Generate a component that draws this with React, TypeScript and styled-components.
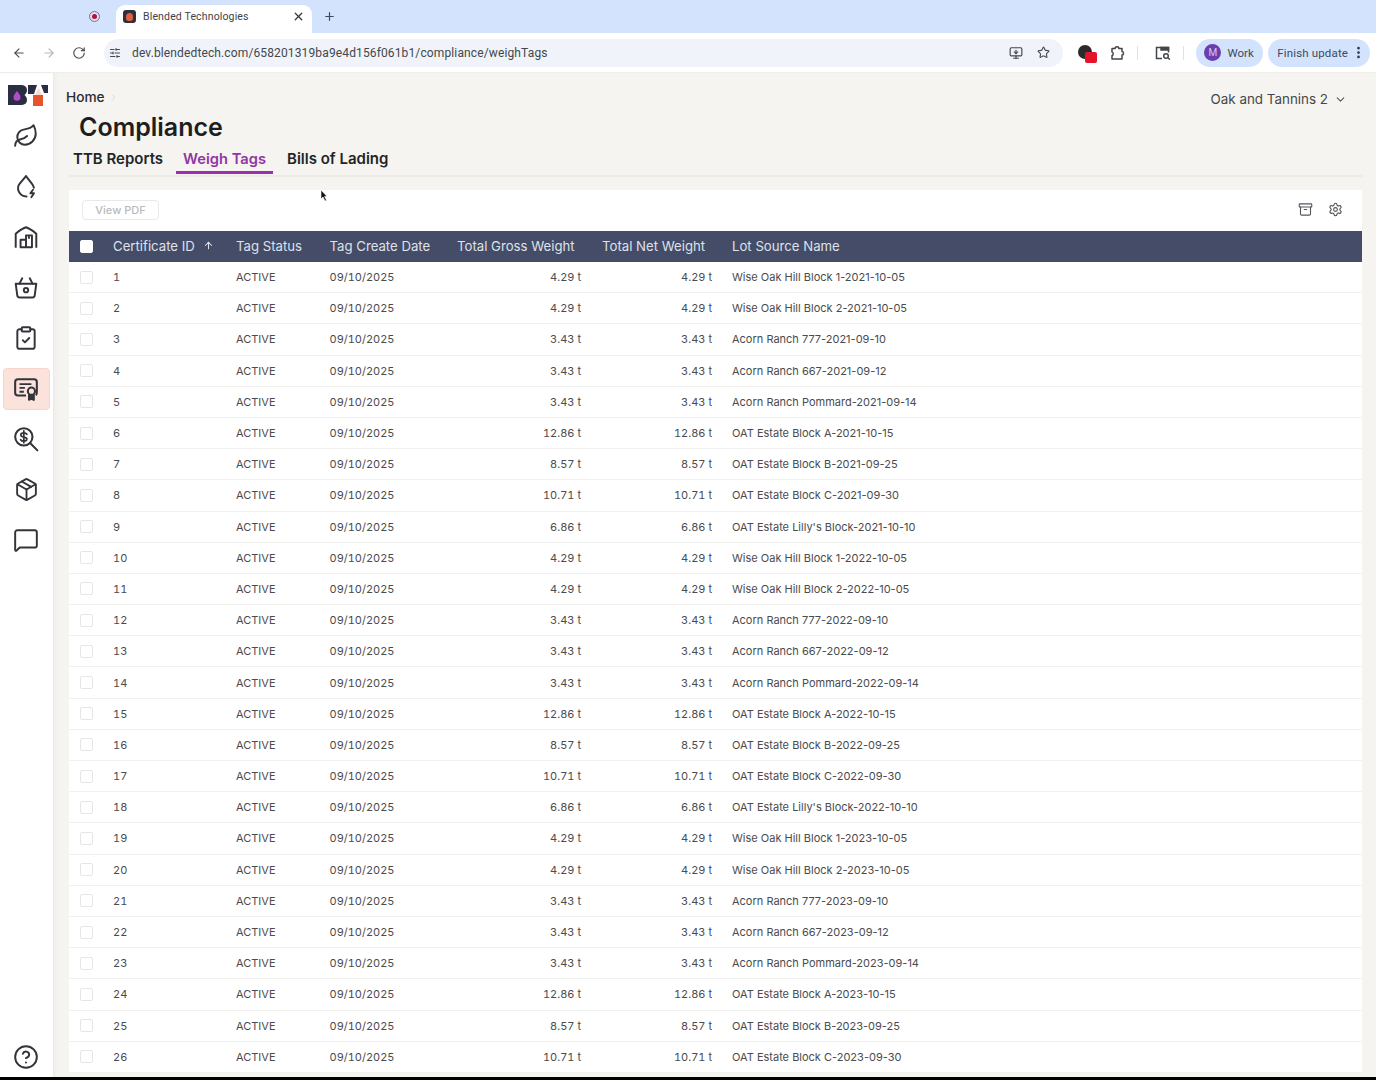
import styled, { createGlobalStyle } from 'styled-components'
import {
  ArrowLeft, ArrowRight, ArrowUp, Archive, ChevronDown, ChevronRight, CircleHelp,
  ClipboardCheck, EllipsisVertical, Leaf, MessageSquare, MonitorDown, Package, Plus, RotateCw,
  Settings, SlidersHorizontal, Star, X,
} from 'lucide-react'

const GlobalStyle = createGlobalStyle`
  html, body { margin: 0; padding: 0; background: #000; }
  body { font-family: Inter, "Liberation Sans", sans-serif; }
  * { box-sizing: border-box; }
`

const Page = styled.div`
  width: 1376px;
  height: 1077px;
  overflow: hidden;
  display: flex;
  flex-direction: column;
  background: #f5f4f0;
`

const TabStrip = styled.div`
  height: 33px;
  background: #d3e3fd;
  display: flex;
  align-items: flex-end;
  padding-left: 89px;
  flex: none;
`

const RecordDot = styled.span`
  width: 11px;
  height: 11px;
  margin-bottom: 11px;
  border-radius: 50%;
  border: 1.5px solid #c8506a;
  display: flex;
  align-items: center;
  justify-content: center;
  margin-right: 16px;
  &::after {
    content: '';
    width: 5px;
    height: 5px;
    border-radius: 50%;
    background: #b3123a;
  }
`

const Tab = styled.div`
  width: 196px;
  height: 28px;
  background: #fff;
  border-radius: 9px 9px 0 0;
  display: flex;
  align-items: center;
  padding: 0 7px 5px 7px;
  font-size: 10.5px;
  color: #3f4347;
  font-family: Roboto, sans-serif;
  letter-spacing: 0.15px;
  svg { margin-left: auto; color: #33373b; }
`

const Favicon = styled.span`
  width: 13px;
  height: 13px;
  border-radius: 3px;
  background: #2e3040;
  margin-right: 7px;
  display: flex;
  align-items: flex-end;
  justify-content: center;
  &::after {
    content: '';
    width: 7px;
    height: 8px;
    margin-bottom: 2px;
    background: #e2603c;
    border-radius: 50% 50% 40% 40%;
  }
`

const NewTab = styled.span`
  display: flex;
  margin: 0 0 10px 11px;
  color: #3f4a5c;
`

const Toolbar = styled.div`
  height: 39px;
  background: #fff;
  display: flex;
  align-items: center;
  padding: 0 6px 0 12px;
  flex: none;
  box-shadow: 0 1px 1px #efeee9;
  position: relative;
  z-index: 1;
`

const NavButton = styled.span<{ $muted?: boolean }>`
  width: 14px;
  display: flex;
  margin-right: 16px;
  color: ${p => (p.$muted ? '#b4b7bb' : '#4a4e52')};
`

const Omnibox = styled.div`
  width: 962px;
  height: 28px;
  margin-left: 2px;
  border-radius: 14px;
  background: #f0f4fa;
  display: flex;
  align-items: center;
  padding: 0 13px 0 5px;
  font-family: Roboto, sans-serif;
  font-size: 12px;
  letter-spacing: 0.13px;
  color: #43474c;
  svg { color: #44484d; }
`

const Url = styled.span`
  margin-left: 11px;
  flex: 1;
`

const OmniIcon = styled.span`
  display: flex;
  margin-left: 14px;
`

const ExtensionDot = styled.span`
  position: relative;
  width: 14px;
  height: 14px;
  margin: -1px 0 0 15px;
  border-radius: 50%;
  background: #2a2a2c;
  &::after {
    content: '';
    position: absolute;
    left: 7px;
    top: 7px;
    width: 12px;
    height: 11px;
    border-radius: 2px;
    background: #e3132c;
  }
`

const ToolIcon = styled.span`
  display: flex;
  margin-left: 17px;
  color: #43474c;
`

const Divider = styled.span`
  width: 1px;
  height: 14px;
  background: #dfe3e8;
  margin-left: 12px;
`

const ProfilePill = styled.div`
  height: 28px;
  width: 67px;
  margin-left: 12px;
  border-radius: 14px;
  background: #d3e3fd;
  display: flex;
  align-items: center;
  padding-left: 8px;
  gap: 6px;
  font-family: Roboto, sans-serif;
  font-size: 11.5px;
  color: #3e4a5c;
`

const Avatar = styled.span`
  width: 17px;
  height: 17px;
  border-radius: 50%;
  background: #6a3db0;
  color: #d9c8f2;
  font-size: 10px;
  display: flex;
  align-items: center;
  justify-content: center;
`

const UpdatePill = styled.div`
  height: 28px;
  width: 102px;
  margin-left: 5px;
  border-radius: 14px;
  background: #d3e3fd;
  display: flex;
  align-items: center;
  padding-left: 9px;
  font-family: Roboto, sans-serif;
  font-size: 11.5px;
  letter-spacing: 0.15px;
  color: #3e4a5c;
  white-space: nowrap;
  svg { margin-left: 3px; flex: none; color: #2f3a4a; }
`

const Body = styled.div`
  flex: 1;
  min-height: 0;
  display: flex;
`

const Sidebar = styled.nav`
  width: 54px;
  flex: none;
  background: #fff;
  border-right: 1px solid #ecebe7;
  box-shadow: 2px 0 3px #f0efea;
  display: flex;
  flex-direction: column;
  align-items: center;
  padding-top: 12px;
`

const Logo = styled.svg`
  width: 40px;
  height: 22px;
  margin: 0 0 9px 3px;
  flex: none;
`

const NavItem = styled.span<{ $active?: boolean }>`
  width: 47px;
  height: 42px;
  margin-bottom: 8.5px;
  margin-left: -1px;
  flex: none;
  display: flex;
  align-items: center;
  justify-content: center;
  border-radius: 4px;
  color: #33343a;
  background: ${p => (p.$active ? '#fbe3dc' : 'transparent')};
  border: 1px solid ${p => (p.$active ? '#f5d5cc' : 'transparent')};
`

const HelpItem = styled(NavItem)`
  margin-top: auto;
  margin-bottom: 0;
  height: 40px;
`

const Main = styled.main`
  flex: 1;
  min-width: 0;
  padding: 0 14px 0 15px;
`

const TopRow = styled.div`
  display: flex;
  justify-content: space-between;
  align-items: center;
  height: 38px;
`

const Breadcrumb = styled.div`
  display: flex;
  align-items: center;
  gap: 3px;
  margin-left: -3px;
  margin-top: 12px;
  font-size: 13.7px;
  font-weight: 500;
  color: #2a2b2e;
  svg { color: #dcdbd6; }
`

const Winery = styled.div`
  display: flex;
  align-items: center;
  gap: 6px;
  margin: 16px 15px 0 0;
  font-size: 13.4px;
  color: #45474a;
  svg { color: #55575a; }
`

const Title = styled.h1`
  margin: 1px 0 0 10px;
  font-size: 25px;
  line-height: 32px;
  font-weight: 600;
  color: #1d1e20;
`

const Tabs = styled.div`
  display: flex;
  height: 34px;
  padding-top: 1px;
  border-bottom: 2px solid #eceae5;
`

const TabItem = styled.a<{ $active?: boolean }>`
  height: 30px;
  padding: 5px 7px 0;
  margin-right: ${p => (p.$active ? '7px' : '6px')};
  margin-left: ${p => (p.$active ? '0' : '-3px')};
  font-size: ${p => (p.$active ? '14.7px' : '15px')};
  font-weight: 600;
  line-height: 20px;
  color: ${p => (p.$active ? '#9236a4' : '#232427')};
  border-bottom: 3px solid ${p => (p.$active ? '#9b2fae' : 'transparent')};
  white-space: nowrap;
  &:last-child { margin-left: 0; }
`

const Card = styled.section`
  margin-top: 13px;
  background: #fff;
`

const CardBar = styled.div`
  height: 41px;
  display: flex;
  align-items: center;
  justify-content: space-between;
  padding: 0 19px 2px 13px;
`

const GhostButton = styled.button`
  height: 20px;
  width: 77px;
  border: 1px solid #e9e9e9;
  border-radius: 4px;
  background: #fff;
  font: 500 11px Inter, sans-serif;
  color: #b9babd;
  padding: 0;
`

const BarIcons = styled.div`
  display: flex;
  gap: 15px;
  color: #55575c;
`

const gridColumns = '44px 123px 93.5px 127.5px 145px 130px 1fr'

const HeaderRow = styled.div`
  display: grid;
  grid-template-columns: ${gridColumns};
  align-items: center;
  height: 31px;
  padding-bottom: 2px;
  background: #444c68;
  color: #dfe2ea;
  font-size: 13.2px;
  white-space: nowrap;
`

const Row = styled.div`
  display: grid;
  grid-template-columns: ${gridColumns};
  align-items: center;
  height: 31.2px;
  border-bottom: 1px solid #f1f1ef;
  font-size: 11px;
  color: #4a4b4e;
  white-space: nowrap;
`

const CheckCell = styled.span`
  display: flex;
  padding-left: 11px;
`

const HeaderCheck = styled(CheckCell)`
  padding-top: 2px;
`

const Check = styled.span<{ $header?: boolean }>`
  width: 13px;
  height: 13px;
  border-radius: 2px;
  background: #fff;
  border: 1px solid ${p => (p.$header ? '#fff' : '#e6e6e6')};
`

const SortCell = styled.span`
  display: flex;
  align-items: center;
  gap: 8px;
`

const Numeric = styled.span`
  font-variant-numeric: tabular-nums;
`

const Weight = styled(Numeric)<{ $pad: number }>`
  text-align: right;
  padding-right: ${p => p.$pad}px;
`

const Cursor = styled.svg`
  position: absolute;
  left: 320px;
  top: 189px;
`

const sources = [
  ['Wise Oak Hill Block 1', '10-05', '4.29 t'],
  ['Wise Oak Hill Block 2', '10-05', '4.29 t'],
  ['Acorn Ranch 777', '09-10', '3.43 t'],
  ['Acorn Ranch 667', '09-12', '3.43 t'],
  ['Acorn Ranch Pommard', '09-14', '3.43 t'],
  ['OAT Estate Block A', '10-15', '12.86 t'],
  ['OAT Estate Block B', '09-25', '8.57 t'],
  ['OAT Estate Block C', '09-30', '10.71 t'],
  ["OAT Estate Lilly's Block", '10-10', '6.86 t'],
]

const rows = Array.from({ length: 26 }, (_, i) => {
  const [name, day, weight] = sources[i % 9]
  return { id: i + 1, weight, lot: `${name}-${2021 + Math.floor(i / 9)}-${day}` }
})

const ic = { size: 14, strokeWidth: 2 }
const side = { size: 26, strokeWidth: 1.8 }

const DropBolt = () => (
  <svg width="26" height="26" viewBox="0 0 24 24" fill="none" stroke="currentColor" strokeWidth="1.8" strokeLinecap="round" strokeLinejoin="round">
    <path d="M12 2 6.200 8.800C2.800 13 5.400 20.600 12.500 20.800" />
    <path d="M12 2l5.400 6.800c1 1.300 1.700 2.600 1.900 3.900" />
    <path d="M18.500 14.500l-2.500 3.300h3.400l-2.500 3.700" strokeWidth="1.700" />
  </svg>
)

const Storehouse = () => (
  <svg width="26" height="26" viewBox="0 0 24 24" fill="none" stroke="currentColor" strokeWidth="1.8" strokeLinejoin="round">
    <path d="M2.500 22V9C6 6 9 4 12 3c3 1 6 3 9.500 6v13" />
    <path d="M7 21.500v-7h5v-4h5.500v11zM12 14.500v7M14.700 10.500v3" />
  </svg>
)

const Basket = () => (
  <svg width="26" height="26" viewBox="0 0 24 24" fill="none" stroke="currentColor" strokeWidth="1.8" strokeLinecap="round" strokeLinejoin="round">
    <path d="M2.500 8h19l-1.400 10.500c-.2 1.400-1 2.200-2.200 2.200H6.100c-1.200 0-2-.8-2.200-2.200z" />
    <path d="M8.500 3 6 8M15.500 3 18 8" />
    <circle cx="12" cy="14" r="2" />
  </svg>
)

const Certificate = () => (
  <svg width="26" height="26" viewBox="0 0 24 24" fill="none" stroke="currentColor" strokeWidth="1.900" strokeLinejoin="round">
    <path d="M12 18H4.500C3 18 2 17 2 15.500v-10C2 4 3 3 4.500 3h15C21 3 22 4 22 5.500v10c0 .9-.4 1.700-1 2.200" />
    <path d="M6 7.500h11M6 11h5M6 14.500h4" strokeWidth="1.700" />
    <circle cx="17" cy="14" r="3.300" />
    <path d="M14.800 17v5l2.200-1.200 2.200 1.200v-5" fill="currentColor" />
  </svg>
)

const DollarSearch = () => (
  <svg width="26" height="26" viewBox="0 0 24 24" fill="none" stroke="currentColor" strokeWidth="1.900" strokeLinecap="round">
    <circle cx="10" cy="10" r="8" />
    <path d="M16 16l6.500 6.500" />
    <path d="M12.800 7.600C12.200 6.700 11.200 6.300 10 6.300c-1.600 0-2.800.8-2.800 2 0 2.800 5.600 1 5.600 3.700 0 1.200-1.200 2-2.800 2-1.300 0-2.400-.5-3-1.400M10 4.600v10.800" strokeWidth="1.600" />
  </svg>
)

const ExtensionPiece = () => (
  <svg width="16" height="16" viewBox="0 0 16 16" fill="none" stroke="currentColor" strokeWidth="1.500" strokeLinejoin="round">
    <path d="M3 14v-3.500c1.600 0 1.600-3.500 0-3.500V3.500h3.200C6.200 1.300 9.800 1.300 9.800 3.500H13v3c2 0 2 3.500 0 3.500v4z" />
  </svg>
)

const SearchPanel = () => (
  <svg width="16" height="14" viewBox="0 0 16 14" fill="none" stroke="currentColor" strokeWidth="1.500">
    <path d="M7 12.500H1.500v-11h12v5" />
    <path d="M6 1.500h7.500v2.500H6z" fill="currentColor" />
    <circle cx="11" cy="10" r="2.300" />
    <path d="M13 12l2 1.500" />
  </svg>
)

export default function App() {
  return (
    <>
      <GlobalStyle />
      <Page>
        <TabStrip>
          <RecordDot />
          <Tab>
            <Favicon />
            Blended Technologies
            <X size={13} strokeWidth={2.4} />
          </Tab>
          <NewTab><Plus size={13} strokeWidth={2.2} /></NewTab>
        </TabStrip>
        <Toolbar>
          <NavButton><ArrowLeft {...ic} /></NavButton>
          <NavButton $muted><ArrowRight {...ic} /></NavButton>
          <NavButton><RotateCw {...ic} /></NavButton>
          <Omnibox>
            <SlidersHorizontal size={12} strokeWidth={2} />
            <Url>dev.blendedtech.com/658201319ba9e4d156f061b1/compliance/weighTags</Url>
            <MonitorDown {...ic} />
            <OmniIcon><Star size={13} strokeWidth={2} /></OmniIcon>
          </Omnibox>
          <ExtensionDot />
          <ToolIcon><ExtensionPiece /></ToolIcon>
          <Divider />
          <ToolIcon><SearchPanel /></ToolIcon>
          <Divider />
          <ProfilePill><Avatar>M</Avatar>Work</ProfilePill>
          <UpdatePill>Finish update<EllipsisVertical size={15} strokeWidth={2.4} /></UpdatePill>
        </Toolbar>
        <Body>
          <Sidebar>
            <Logo viewBox="0 0 40 22">
              <path d="M0 1h12c5 0 7 2 7 5 0 2-1 4-2.500 5 1.500 1 2.500 3 2.500 5 0 3-2 5-7 5H0z" fill="#2c2d42" />
              <path d="M9 7c2 2.300 3.500 4.300 3.500 6.300a3.500 3.500 0 0 1-7 0C5.500 11.300 7 9.300 9 7z" fill="#b04bd0" />
              <path d="M20 1h9l-3 9h-6zM33 1h7v8h-4z" fill="#2c2d42" />
              <path d="M30.500 4l4 8h-8z" fill="#f6d9cf" />
              <path d="M25 11h10v11H25z" fill="#e7532d" />
            </Logo>
            <NavItem><Leaf {...side} /></NavItem>
            <NavItem><DropBolt /></NavItem>
            <NavItem><Storehouse /></NavItem>
            <NavItem><Basket /></NavItem>
            <NavItem><ClipboardCheck {...side} /></NavItem>
            <NavItem $active><Certificate /></NavItem>
            <NavItem><DollarSearch /></NavItem>
            <NavItem><Package size={25} strokeWidth={1.8} /></NavItem>
            <NavItem><MessageSquare {...side} /></NavItem>
            <HelpItem><CircleHelp {...side} /></HelpItem>
          </Sidebar>
          <Main>
            <TopRow>
              <Breadcrumb>Home<ChevronRight size={11} /></Breadcrumb>
              <Winery>Oak and Tannins 2<ChevronDown size={13} /></Winery>
            </TopRow>
            <Title>Compliance</Title>
            <Tabs>
              <TabItem>TTB Reports</TabItem>
              <TabItem $active>Weigh Tags</TabItem>
              <TabItem>Bills of Lading</TabItem>
            </Tabs>
            <Card>
              <CardBar>
                <GhostButton disabled>View PDF</GhostButton>
                <BarIcons>
                  <Archive size={15} strokeWidth={1.8} />
                  <Settings size={15} strokeWidth={1.8} />
                </BarIcons>
              </CardBar>
              <HeaderRow>
                <HeaderCheck><Check $header /></HeaderCheck>
                <SortCell>Certificate ID<ArrowUp size={11} strokeWidth={2.2} /></SortCell>
                <span>Tag Status</span>
                <span>Tag Create Date</span>
                <span>Total Gross Weight</span>
                <span>Total Net Weight</span>
                <span>Lot Source Name</span>
              </HeaderRow>
              {rows.map(r => (
                <Row key={r.id}>
                  <CheckCell><Check /></CheckCell>
                  <Numeric>{r.id}</Numeric>
                  <span>ACTIVE</span>
                  <Numeric>09/10/2025</Numeric>
                  <Weight $pad={21}>{r.weight}</Weight>
                  <Weight $pad={20}>{r.weight}</Weight>
                  <span>{r.lot}</span>
                </Row>
              ))}
            </Card>
          </Main>
        </Body>
        <Cursor width="8" height="13" viewBox="0 0 8 13">
          <path d="M1 1v9l2-2 2 4 1.500-.8-2-3.700H7z" fill="#111" stroke="#fff" strokeWidth=".6" />
        </Cursor>
      </Page>
    </>
  )
}
